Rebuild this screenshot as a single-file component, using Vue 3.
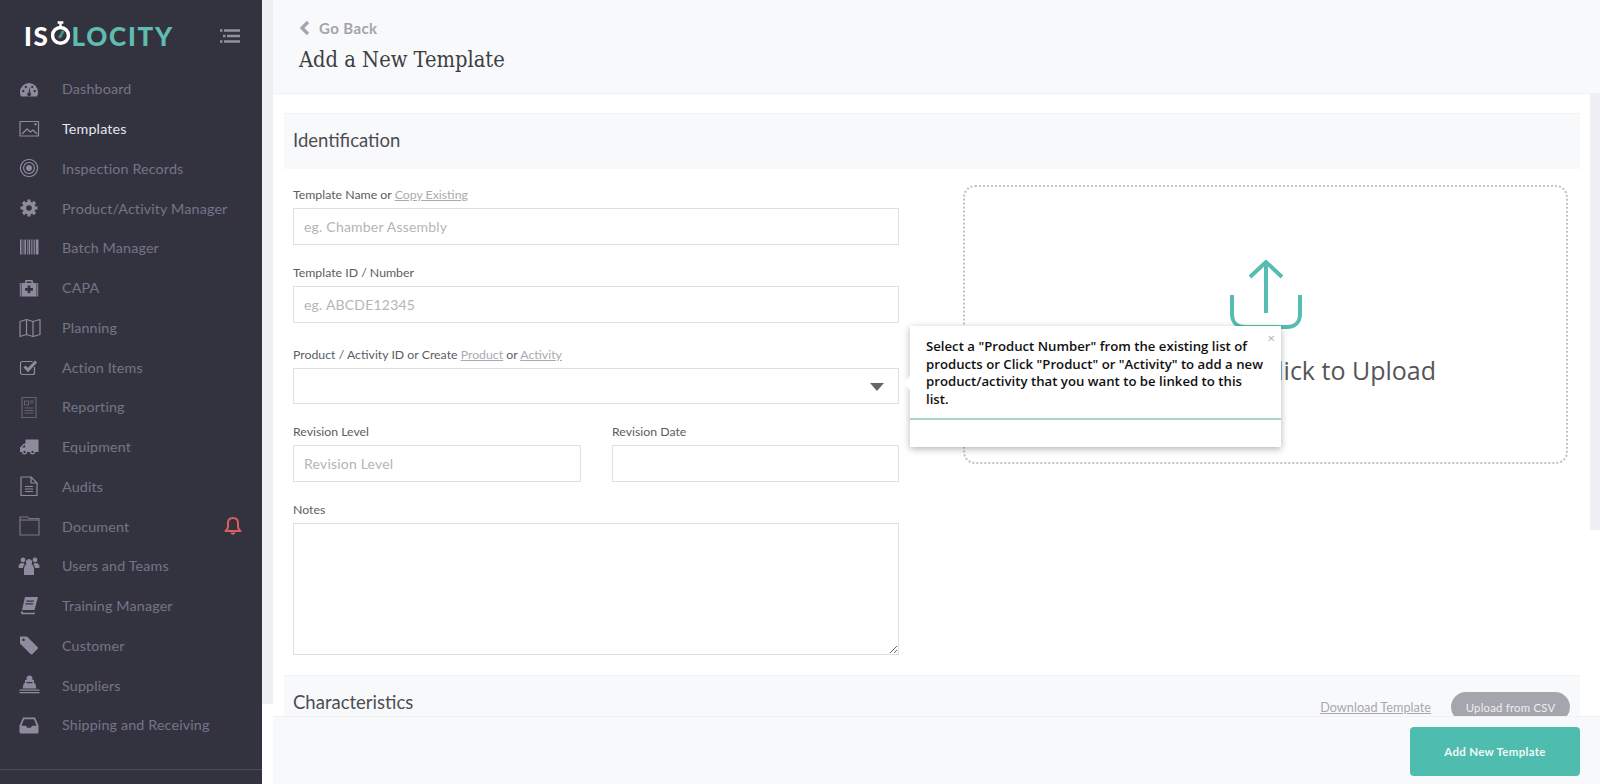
<script setup>
const d = '#33333f'
const nav = [
  { label: 'Dashboard', fill: ['M1 13a9 9 0 1 1 18 0c0 2-.4 3.400-1 4.500H2c-.6-1.100-1-2.500-1-4.500z'], holes: ['M4.300 10.800a1.200 1.200 0 1 0 .01 0z', 'M6.800 6.800a1.200 1.200 0 1 0 .01 0z', 'M13.200 6.800a1.200 1.200 0 1 0 .01 0z', 'M15.700 10.800a1.200 1.200 0 1 0 .01 0z', 'M10.700 7.500l-1.100 6a1.900 1.900 0 1 0 1.700.3z'] },
  { label: 'Templates', active: true, stroke: ['M1 2.500h18.500v14.500H1z', 'M3 15l5-5 3.500 3 2.500-2 4 4'], fill: ['M16.500 4a1.200 1.200 0 1 0 .01 0z'] },
  { label: 'Inspection Records', stroke: ['M10 1.500a8.500 8.500 0 1 0 .01 0z', 'M10 4.500a5.500 5.500 0 1 0 .01 0z'], fill: ['M10 7a3 3 0 1 0 .01 0z'] },
  { label: 'Product/Activity Manager', gear: true },
  { label: 'Batch Manager', fill: ['M1 1.500h1.500v15H1z', 'M3.600 1.500h.8v15h-.8z', 'M5.400 1.500h1.600v15H5.400z', 'M8 1.500h.7v15H8z', 'M9.600 1.500h1.600v15H9.600z', 'M12 1.500h.7v15H12z', 'M13.600 1.500h.8v15h-.8z', 'M15.200 1.500h1v15h-1z', 'M17 1.500h2.500v15H17z'] },
  { label: 'CAPA', fill: ['M2.500 5H6V3.500C6 2.500 6.800 2 7.500 2h5c.8 0 1.500.5 1.500 1.500V5h3.500v13.500h-15zM7.500 3.500V5h5V3.500z', 'M.8 5h1v13.500h-1zM18.200 5h1v13.500h-1z'], holes: ['M8.700 7.500h2.600v2.600h2.600v2.600h-2.600v2.600H8.700v-2.600H6.100v-2.600h2.600z'] },
  { label: 'Planning', stroke: ['M1 4.500l6.500-2 6.500 2 7-2v15l-7 2-6.500-2-6.500 2z', 'M7.500 2.500v15', 'M14 4.500v15'] },
  { label: 'Action Items', stroke: ['M15.500 10v5.500c0 1.200-.8 2-2 2H3.500c-1.200 0-2-.8-2-2v-9c0-1.200.8-2 2-2h10'], thick: ['M5.500 9.500l3.500 3.500 8-8.500'] },
  { label: 'Reporting', dim: true, stroke: ['M3 .5h14v20H3z', 'M5.500 4h4v4h-4z', 'M11 4h3.500M11 6h3.500M5.500 11h9M5.500 13.500h9M5.500 16h9'] },
  { label: 'Equipment', fill: ['M6.500 2.500h13v12.500H16a2.500 2.500 0 0 1-5 0H8a2.500 2.500 0 0 1-5 0H1v-4.500L5 6.500h1.500z'], holes: ['M5.500 13.800a1.200 1.200 0 1 0 .01 0z', 'M13.500 13.800a1.200 1.200 0 1 0 .01 0z', 'M3 10.500l2.600-2.600H6v2.600z'] },
  { label: 'Audits', stroke: ['M2 1h10l6 6v12.500H2z', 'M12 1v6h6', 'M6 10.500h8M6 13h8M6 15.500h8'] },
  { label: 'Document', faint: true, stroke: ['M1 1h8l1 1.500h10V19H1z', 'M1 4h19'] },
  { label: 'Users and Teams', fill: ['M4 1.500a2.400 2.400 0 1 0 .01 0z', 'M16 1.500a2.400 2.400 0 1 0 .01 0z', 'M10 3a3.200 3.200 0 1 0 .01 0z', 'M-.5 11c0-2.500 1.500-4 3.500-4 1 0 2 .5 2.800 1.200C4.800 9 4.200 10 4 12H1c-1 0-1.500-.4-1.500-1zM20.500 11c0-2.500-1.500-4-3.500-4-1 0-2 .5-2.800 1.200 1 .8 1.600 1.800 1.800 3.800h3c1 0 1.500-.4 1.500-1z', 'M5 13c0-3 2-5 3-5h4c1 0 3 2 3 5v6H5z'] },
  { label: 'Training Manager', fill: ['M6 1h13l-3.500 13H3z', 'M2.500 15.500a2 2 0 0 0-.5 2c.2.6 1 .8 1.700.8h11.800l.7-1.500H4.500c-.7 0-.8-.6-.2-1.300z'], holes: ['M7.500 4.500h7.500l-.4 1.300H7.100zM6.800 7.300h7.500l-.4 1.300H6.400z'] },
  { label: 'Customer', fill: ['M1 1.500h7l10.500 10.500c.6.6.6 1.400 0 2l-5 5c-.6.6-1.400.6-2 0L1 8.500z'], holes: ['M4.500 3.500a1.300 1.300 0 1 0 .01 0z'] },
  { label: 'Suppliers', fill: ['M7.500 3.500C7.500 1.500 8.800.5 10.500.5s3 1 3 3V5H15v2.800l1.500 1.200.8 4.500H3.700l.8-4.500L6 7.800V5h1.500z', 'M.5 14.500h20v1.200H.5zM.5 17h20v1.300H.5z'], holes: ['M7.500 7h6v1.200h-6z'] },
  { label: 'Shipping and Receiving', fill: ['M4 2.500h12l3.500 8V17c0 .8-.7 1.500-1.500 1.500H2c-.8 0-1.500-.7-1.500-1.500v-6.500z'], holes: ['M5 4.300h10l2.500 6.500H13l-1.200 2H8.200l-1.200-2H2.500z'] },
]
</script>

<template>
  <div class="app">
    <aside class="sidebar">
      <div class="brand">
        <div class="logo" aria-label="ISOLOCITY">
          <span class="logo-white">IS</span>
          <svg class="watch" viewBox="0 0 22 26" width="21" height="25">
            <path d="M8 1.500h6M11 1.500v4" stroke="#fff" stroke-width="2.500" fill="none" />
            <circle cx="11" cy="15" r="8.300" fill="none" stroke="#fff" stroke-width="3.600" />
            <path d="M14 10l-3 6-2 1" stroke="#3f8f8a" stroke-width="3" fill="none" />
          </svg>
          <span class="logo-teal">LOCITY</span>
        </div>
        <svg class="menu" viewBox="0 0 20 14" width="20" height="14">
          <path d="M0 1.500h2.500M4 1.500h16M3 7h2.500M7 7h13M0 12.500h2.500M4 12.500h16" stroke="#93919f" stroke-width="2.600" fill="none" />
        </svg>
      </div>
      <nav class="nav">
        <a v-for="item in nav" :key="item.label" class="nav-item" :class="{ active: item.active, dim: item.dim, faint: item.faint }">
          <svg class="nav-icon" viewBox="0 0 20 20" width="20" height="20">
            <template v-if="item.gear">
              <path d="M10 1.500v17M1.500 10h17M4 4l12 12M16 4L4 16" stroke="#8f8a9e" stroke-width="3.200" fill="none" />
              <circle cx="10" cy="10" r="6.500" fill="#8f8a9e" />
              <circle cx="10" cy="10" r="2.800" :fill="d" />
            </template>
            <path v-for="p in item.fill" :key="p" :d="p" fill="#8f8a9e" />
            <path v-for="p in item.holes" :key="p" :d="p" :fill="d" />
            <path v-for="p in item.stroke" :key="p" :d="p" fill="none" stroke="#8f8a9e" stroke-width="1.200" stroke-linejoin="round" />
            <path v-for="p in item.thick" :key="p" :d="p" fill="none" stroke="#8f8a9e" stroke-width="3" />
          </svg>
          <span class="nav-label">{{ item.label }}</span>
          <svg v-if="item.label === 'Document'" class="bell" viewBox="0 0 18 20" width="18" height="20">
            <path d="M9 2c-3 0-5 2-5 5v4c0 2-1.500 3-2.500 4h15c-1-1-2.500-2-2.500-4V7c0-3-2-5-5-5z" fill="none" stroke="#d9605f" stroke-width="2" stroke-linejoin="round" />
            <path d="M6.500 16.500c.3 1.500 1.300 2.200 2.500 2.200s2.200-.7 2.500-2.200z" fill="#d9605f" />
          </svg>
        </a>
      </nav>
      <div class="side-foot"></div>
    </aside>

    <div class="gutter"></div>

    <div class="main">
      <header class="header">
        <a class="back">
          <svg viewBox="0 0 12 16" width="12" height="16"><path d="M9 2L3 8l6 6" fill="none" stroke="#a3a5aa" stroke-width="3.200" /></svg>
          <span>Go Back</span>
        </a>
        <h1 class="title">Add a New Template</h1>
      </header>

      <div class="body">
        <div class="content">
          <section class="section-head"><h2>Identification</h2></section>

          <div class="form-grid">
            <form class="form">
              <div class="field">
                <label>Template Name or <a>Copy Existing</a></label>
                <input type="text" placeholder="eg. Chamber Assembly" />
              </div>
              <div class="field roomy">
                <label>Template ID / Number</label>
                <input type="text" placeholder="eg. ABCDE12345" />
              </div>
              <div class="field">
                <label>Product / Activity ID or Create <a>Product</a> or <a>Activity</a></label>
                <div class="select"><i class="caret"></i></div>
              </div>
              <div class="row">
                <div class="field">
                  <label>Revision Level</label>
                  <input type="text" placeholder="Revision Level" />
                </div>
                <div class="field">
                  <label>Revision Date</label>
                  <input type="text" />
                </div>
              </div>
              <div class="field">
                <label>Notes</label>
                <textarea></textarea>
              </div>
            </form>

            <div class="drop">
              <svg class="upload" viewBox="0 0 72 70" width="72" height="70">
                <path d="M36 2v51M20 17L36 2l16 15" fill="none" stroke="#55bdb1" stroke-width="4" />
                <path d="M2 35v19c0 8 5 13 13 13h42c8 0 13-5 13-13V35" fill="none" stroke="#55bdb1" stroke-width="4" />
              </svg>
              <p class="drop-text">Drag a File or Click to Upload</p>
            </div>
          </div>

          <section class="section-head chars">
            <h2>Characteristics</h2>
            <div class="chars-actions">
              <a class="dl">Download Template</a>
              <button type="button" class="csv">Upload from CSV</button>
            </div>
          </section>

          <div class="pop">
            <i class="pop-arrow"></i>
            <span class="pop-close">×</span>
            <p class="pop-text">Select a "Product Number" from the existing list of products or Click "Product" or "Activity" to add a new product/activity that you want to be linked to this list.</p>
            <div class="pop-foot"></div>
          </div>
        </div>
        <div class="scrollbar"></div>
      </div>

      <footer class="footer">
        <button type="button" class="add">Add New Template</button>
      </footer>
    </div>
  </div>
</template>

<style>
html, body { margin: 0; height: 100%; overflow: hidden; background: #fff; }
</style>

<style scoped>
* { box-sizing: border-box; }
.app { display: flex; width: 1600px; height: 784px; overflow: hidden; font-family: Lato, "Open Sans", sans-serif; background: #fff; }

.sidebar { width: 262px; flex: none; height: 784px; background: #33333f; display: flex; flex-direction: column; }
.brand { height: 68px; flex: none; display: flex; align-items: center; justify-content: space-between; padding: 4px 22px 0 24px; }
.logo { display: flex; align-items: center; font-weight: 900; font-size: 26px; letter-spacing: 1.700px; line-height: 1; font-family: Lato, sans-serif; }
.logo-white { color: #fff; }
.logo-teal { color: #5fbcb0; margin-left: 1px; }
.watch { margin: -5px 0 0 0; }
.nav { display: flex; flex-direction: column; padding-top: 1px; }
.nav-item { height: 39.750px; display: flex; align-items: center; padding-left: 19px; color: #767389; font-size: 14.300px; letter-spacing: .15px; position: relative; }
.nav-item.active { color: #e6e6ea; }
.nav-item.dim .nav-icon { opacity: .55; }
.nav-item.faint .nav-icon { opacity: .75; }
.nav-icon { flex: none; margin-right: 23px; overflow: visible; }
.bell { position: absolute; left: 224px; top: 10px; }
.side-foot { margin-top: auto; height: 15px; border-top: 1px solid #4b4b58; }

.gutter { width: 11px; height: 704px; flex: none; background: #eef0f3; }

.main { flex: 1; min-width: 0; height: 784px; display: flex; flex-direction: column; }
.header { height: 94px; flex: none; background: #f8f9fb; border-bottom: 1px solid #f0f1f3; padding: 18px 0 0 26px; }
.back { display: flex; align-items: center; gap: 8px; height: 20px; color: #a3a5aa; font-weight: 700; font-size: 15px; letter-spacing: .4px; }
.title { margin: 9px 0 0; font: 400 21.700px/26px "DejaVu Serif Condensed", "Liberation Serif", serif; color: #3d3e42; }

.body { flex: 1; min-height: 0; display: flex; overflow: hidden; }
.content { flex: 1; min-width: 0; padding: 19px 10px 0 11px; position: relative; overflow: hidden; }
.scrollbar { width: 10px; height: 436px; flex: none; background: #eef0f3; }

.section-head { height: 56px; background: #f8f9fa; border-top: 1px solid #f1f2f4; padding: 0 9px 4px; display: flex; align-items: center; justify-content: space-between; }
.section-head h2 { margin: 0; font-size: 18.500px; font-weight: 400; color: #4c4d52; letter-spacing: 0; }

.form-grid { display: grid; grid-template-columns: 606px 605px; column-gap: 64px; padding: 15px 0 0 9px; }
.form { display: flex; flex-direction: column; }
.field { display: flex; flex-direction: column; margin-bottom: 17px; min-width: 0; }
.field.roomy { margin-bottom: 21px; }
.field label { height: 24px; font-size: 12.300px; color: #5c5d62; line-height: 21px; }
.field a { color: #a9abb0; text-decoration: underline; }
.field input, .select, .field textarea { border: 1px solid #dfe0e2; background: #fff; border-radius: 0; outline: none; font: inherit; }
.field input { height: 37px; width: 100%; padding: 0 10px; font-size: 14px; letter-spacing: .2px; color: #555; }
.field input::placeholder { color: #b4b5b9; opacity: 1; }
.select { height: 36px; position: relative; }
.caret { position: absolute; right: 14px; top: 14px; width: 0; height: 0; border-left: 7px solid transparent; border-right: 7px solid transparent; border-top: 8px solid #66676b; }
.row { display: grid; grid-template-columns: 288px 287px; column-gap: 31px; }
.field textarea { height: 132px; width: 100%; resize: vertical; display: block; }
.form .field:last-child { margin-bottom: 0; }

.drop { height: 279px; margin-top: 1px; border: 2px dotted #c2c3c6; border-radius: 12px; display: flex; flex-direction: column; align-items: center; padding-top: 73px; }
.upload { display: block; }
.drop-text { margin: 23px 0 0; padding-left: 6px; white-space: nowrap; font-family: "Open Sans", sans-serif; font-size: 25px; color: #55565a; }

.chars { height: 60px; margin-top: 20px; align-items: flex-start; padding-top: 15px; padding-right: 10px; }
.chars-actions { display: flex; align-items: center; gap: 20px; margin-top: 1px; }
.dl { font-size: 12.700px; color: #a7a8ae; text-decoration: underline; letter-spacing: 0; }
.csv { width: 119px; height: 30px; border: 0; border-radius: 15px; background: #a5a5ae; color: #eeeef0; font: inherit; font-size: 11.400px; letter-spacing: .2px; }

.pop { position: absolute; left: 637px; top: 232px; width: 371px; height: 121px; background: #fff; box-shadow: 0 2px 7px rgba(0, 0, 0, .3); font-family: "Open Sans", sans-serif; }
.pop-arrow { position: absolute; left: -5px; top: 52px; width: 10px; height: 10px; background: #fff; transform: rotate(45deg); }
.pop-close { position: absolute; right: 6px; top: 3px; font-size: 13px; color: #b0b0b0; line-height: 18px; }
.pop-text { margin: 0; position: relative; height: 94px; padding: 12px 16px 0 16px; border-bottom: 2px solid #a6d5cf; font-size: 13.200px; line-height: 17.600px; font-weight: 600; color: #111; }

.footer { height: 68px; flex: none; background: #f8f9fb; border-top: 1px solid #f0f1f3; display: flex; justify-content: flex-end; align-items: flex-start; padding: 10px 20px 0 0; }
.add { width: 170px; height: 49px; border: 0; border-radius: 4px; background: #4fbcb0; color: #eef9f7; font: 700 11.500px Lato, sans-serif; letter-spacing: .3px; }
</style>
